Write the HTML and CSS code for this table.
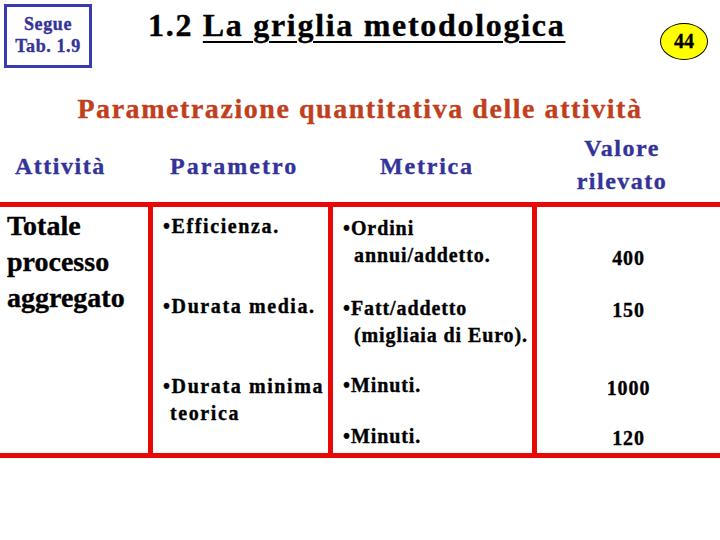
FILE: index.html
```html
<!DOCTYPE html>
<html lang="it">
<head>
<meta charset="utf-8">
<title>1.2 La griglia metodologica</title>
<link rel="stylesheet" href="styles.css">
</head>
<body>
<div class="slide">
  <div class="top">
    <div class="segue">Segue<br>Tab. 1.9</div>
    <h1 class="title">1.2 <u>La griglia metodologica</u></h1>
    <div class="badge">44</div>
  </div>
  <h2 class="subtitle">Parametrazione quantitativa delle attività</h2>
  <div class="heads">
    <div class="h h1">Attività</div>
    <div class="h h2">Parametro</div>
    <div class="h h3">Metrica</div>
    <div class="h h4">Valore<br>rilevato</div>
  </div>
  <div class="tbl">
    <div class="c c1">Totale<br>processo<br>aggregato</div>
    <div class="c c2">
      <p class="it">•Efficienza.</p>
      <p class="it g53">•Durata media.</p>
      <p class="it g53">•Durata minima<br>teorica</p>
    </div>
    <div class="c c3">
      <p class="it">•Ordini<br>annui/addetto.</p>
      <p class="it g26">•Fatt/addetto<br>(migliaia di Euro).</p>
      <p class="it g23">•Minuti.</p>
      <p class="it g24">•Minuti.</p>
    </div>
    <div class="c c4">
      <p class="num">400</p>
      <p class="num g25">150</p>
      <p class="num g51">1000</p>
      <p class="num g23">120</p>
    </div>
  </div>
</div>
</body>
</html>
```
FILE: styles.css
```css
html, body {
  margin: 0;
  padding: 0;
  background: #ffffff;
}
.slide {
  width: 720px;
  height: 540px;
  overflow: hidden;
  font-family: "Liberation Serif", "Times New Roman", serif;
  font-weight: 700;
  color: #000;
  -webkit-text-stroke: 0.35px currentColor;
}
.top {
  display: flex;
  align-items: flex-start;
  height: 80px;
}
.segue {
  box-sizing: border-box;
  margin: 4px 0 0 4px;
  width: 88px;
  height: 64px;
  border: 3px solid #3a3ab0;
  color: #333399;
  font-size: 18px;
  line-height: 22px;
  letter-spacing: 0.6px;
  text-align: center;
  padding-top: 6px;
}
.title {
  margin: 5px 0 0 56px;
  font-size: 32px;
  line-height: 40px;
  letter-spacing: 1.7px;
  font-weight: 700;
}
.title u {
  text-decoration-thickness: 2px;
  text-underline-offset: 5px;
}
.badge {
  box-sizing: border-box;
  margin: 23px 12px 0 auto;
  width: 48px;
  height: 37px;
  border-radius: 50%;
  border: 1px solid #000;
  background: #ffff00;
  font-size: 20px;
  line-height: 35px;
  text-align: center;
}
.subtitle {
  margin: 12px 0 0 0;
  font-size: 28px;
  line-height: 34px;
  letter-spacing: 1.55px;
  color: #c0401e;
  text-align: center;
  font-weight: 700;
}
.heads {
  display: grid;
  grid-template-columns: 148px 180px 204px 188px;
  height: 76px;
  color: #333399;
  font-size: 24px;
  line-height: 33px;
  letter-spacing: 1.5px;
}
.h { padding-top: 24px; }
.h1 { padding-left: 15px; }
.h2 { padding-left: 22px; letter-spacing: 2px; }
.h3 { padding-left: 52px; letter-spacing: 1.8px; }
.h4 { padding-top: 6px; text-align: center; padding-right: 8px; }

.tbl {
  display: grid;
  grid-template-columns: 148px 180px 204px 188px;
  grid-template-rows: 246px;
  border-top: 5px solid #e80808;
  border-bottom: 5px solid #e80808;
}
.c { box-sizing: border-box; }
.c2, .c3, .c4 { border-left: 5px solid #e80808; }
.c1 {
  padding: 1px 0 0 7px;
  font-size: 28px;
  line-height: 36px;
}
.it, .num {
  margin: 0;
  font-size: 20px;
  line-height: 27px;
  letter-spacing: 0.9px;
}
.c2 { padding: 6px 0 0 17px; }
.c2 .it { text-indent: -7px; letter-spacing: 1.6px; }
.c3 { padding: 8px 0 0 21px; }
.c3 .it { text-indent: -11px; }
.c4 { padding-top: 38px; text-align: center; }
.g23 { margin-top: 23px; }
.g24 { margin-top: 24px; }
.g25 { margin-top: 25px; }
.g26 { margin-top: 26px; }
.g51 { margin-top: 51px; }
.g53 { margin-top: 53px; }
```
